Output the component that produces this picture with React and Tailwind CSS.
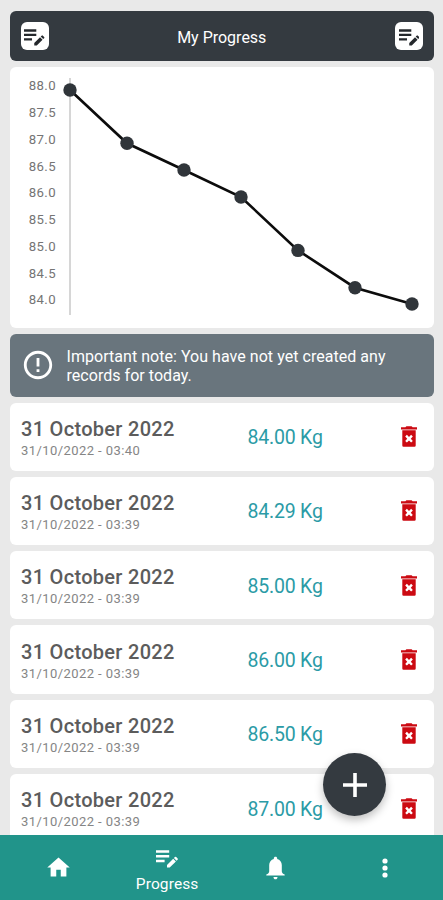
import React from 'react';
import { MdErrorOutline, MdHome } from 'react-icons/md';

const records = [
  { id: 1, title: '31 October 2022', time: '31/10/2022 - 03:40', weight: '84.00 Kg' },
  { id: 2, title: '31 October 2022', time: '31/10/2022 - 03:39', weight: '84.29 Kg' },
  { id: 3, title: '31 October 2022', time: '31/10/2022 - 03:39', weight: '85.00 Kg' },
  { id: 4, title: '31 October 2022', time: '31/10/2022 - 03:39', weight: '86.00 Kg' },
  { id: 5, title: '31 October 2022', time: '31/10/2022 - 03:39', weight: '86.50 Kg' },
  { id: 6, title: '31 October 2022', time: '31/10/2022 - 03:39', weight: '87.00 Kg' },
];

const ticks = ['88.0', '87.5', '87.0', '86.5', '86.0', '85.5', '85.0', '84.5', '84.0'];

// Chart points in card coordinates
const points = [
  [60, 23],
  [117, 76.3],
  [174, 103],
  [231, 130],
  [288, 183.4],
  [345, 220.7],
  [402, 237],
];

const NoteIcon = ({ className }) => (
  <svg className={className} viewBox="0 0 22 18" fill="currentColor" aria-hidden="true">
    <path d="M0 .2h13.2v2.5H0zM0 5h13.2v2.5H0zM0 9.8h8.6v2.5H0z" />
    <path d="M11 17.6v-2.7l6.2-6.2 2.7 2.7-6.2 6.2zM17.9 8l1-1a.9.9 0 0 1 1.3 0l1.4 1.4a.9.9 0 0 1 0 1.3l-1 1z" />
  </svg>
);

const TrashIcon = () => (
  <svg className="h-[21px] w-4" viewBox="0 0 16 21" fill="currentColor" aria-hidden="true">
    <path d="M0 1.3h4.4L5.4.2h5.2l1 1.1H16v2.1H0z" />
    <path fillRule="evenodd" d="M1.3 4.3h13.4v15.2a1.2 1.2 0 0 1-1.2 1.2h-11a1.2 1.2 0 0 1-1.2-1.2zM5.9 8.8 4.2 10.5 6.2 12.7 4.2 14.9 5.9 16.6 8 14.4l2.1 2.2 1.7-1.7-2-2.2 2-2.2-1.7-1.7L8 11z" />
  </svg>
);

const BellIcon = () => (
  <svg className="h-6 w-[19px]" viewBox="0 0 19 24" fill="currentColor" aria-hidden="true">
    <path d="M9.5.8c-1 0-1.7.7-1.7 1.6v.5C5 3.6 3.2 6 3.2 9v6.3c0 1.6-1.1 2.4-2.9 3.3v1h18.4v-1c-1.8-.9-2.9-1.7-2.9-3.3V9c0-3-1.8-5.4-4.6-6.1v-.5c0-.9-.7-1.6-1.7-1.6zM7.5 21h4c0 1.4-.8 2.3-2 2.3s-2-.9-2-2.3z" />
  </svg>
);

const EditButton = () => (
  <button className="flex h-7 w-7 items-center justify-center rounded-md bg-white pt-0.5 text-[#24282c]" aria-label="Edit">
    <NoteIcon className="h-[17px] w-[20.5px]" />
  </button>
);

const WeightChart = () => (
  <svg className="block h-full w-full" viewBox="0 0 424.5 260.5" role="img" aria-label="Weight">
    <line x1="60" y1="11" x2="60" y2="248" stroke="#c9c9c9" strokeWidth="1.5" />
    {ticks.map((tick, i) => (
      <text key={tick} x="46" y={23.3 + i * 26.75} textAnchor="end" fontSize="13.2" letterSpacing="0.4" fill="#757575">
        {tick}
      </text>
    ))}
    <polyline points={points.map(p => p.join(',')).join(' ')} fill="none" stroke="#0c0c0c" strokeWidth="2.6" />
    {points.map(([x, y]) => (
      <circle key={x} cx={x} cy={y} r="6.7" fill="#30353a" />
    ))}
  </svg>
);

const RecordRow = ({ record }) => (
  <li className="flex h-[68.3px] shrink-0 items-center rounded-md bg-white pl-[11.5px] pr-[17px]">
    <div className="w-[226.5px] pt-1">
      <p className="text-[20px] font-medium leading-6 tracking-[0.3px] text-[#5c5c5c]">{record.title}</p>
      <p className="text-[13px] leading-5 tracking-[0.42px] text-[#858585]">{record.time}</p>
    </div>
    <p className="flex-1 pt-[3px] text-[19.5px] leading-6 tracking-[-0.2px] text-[#2b9ba6]">{record.weight}</p>
    <button className="text-[#cc0a12]" aria-label="Delete">
      <TrashIcon />
    </button>
  </li>
);

const App = () => {
  return (
    <div className="relative flex h-[900px] w-[443px] flex-col overflow-hidden bg-[#e9e9e9] font-[Roboto,sans-serif]">
      <main className="flex min-h-0 flex-1 flex-col gap-1.5 overflow-hidden pl-[9.5px] pr-[9px] pt-[11px]">
        <header className="flex h-[50px] shrink-0 items-center justify-between rounded-md bg-[#343a40] px-[11px]">
          <EditButton />
          <h1 className="pt-[3px] text-base text-white">My Progress</h1>
          <EditButton />
        </header>

        <section className="h-[260.5px] shrink-0 rounded-md bg-white">
          <WeightChart />
        </section>

        <div className="flex h-[63px] shrink-0 items-center rounded-md bg-[#69757d] pl-[11px] text-white">
          <MdErrorOutline className="h-[34px] w-[34px] shrink-0" />
          <p className="ml-3 w-[330px] pt-0.5 text-base leading-[19px] tracking-[0.04px]">
            Important note: You have not yet created any records for today.
          </p>
        </div>

        <ul className="flex flex-col gap-1.5">
          {records.map(record => (
            <RecordRow key={record.id} record={record} />
          ))}
        </ul>
      </main>

      <button
        className="absolute bottom-[84px] right-[57px] flex h-[63px] w-[63px] items-center justify-center rounded-full bg-[#343a40] text-white shadow-[0_4px_8px_rgba(0,0,0,0.25)]"
        aria-label="Add record"
      >
        <svg className="h-6 w-6" viewBox="0 0 24 24" stroke="currentColor" strokeWidth="3.6">
          <path d="M12 0v24M0 12h24" />
        </svg>
      </button>

      <nav className="flex h-[65px] shrink-0 items-center bg-[#21948a] px-1 text-white">
        <a className="flex flex-1 justify-center" aria-label="Home">
          <MdHome className="h-[27px] w-[27px]" />
        </a>
        <a className="flex flex-1 flex-col items-center pt-[9px]">
          <NoteIcon className="mb-1.5 h-[18px] w-[22px]" />
          <span className="text-[15.5px] leading-5 tracking-[0.1px]">Progress</span>
        </a>
        <a className="flex flex-1 justify-center" aria-label="Notifications">
          <BellIcon />
        </a>
        <a className="flex flex-1 justify-center" aria-label="More">
          <svg className="h-5 w-1.5" viewBox="0 0 6 20" fill="currentColor">
            <circle cx="3" cy="3" r="2.6" />
            <circle cx="3" cy="10" r="2.6" />
            <circle cx="3" cy="17" r="2.6" />
          </svg>
        </a>
      </nav>
    </div>
  );
};

export default App;
